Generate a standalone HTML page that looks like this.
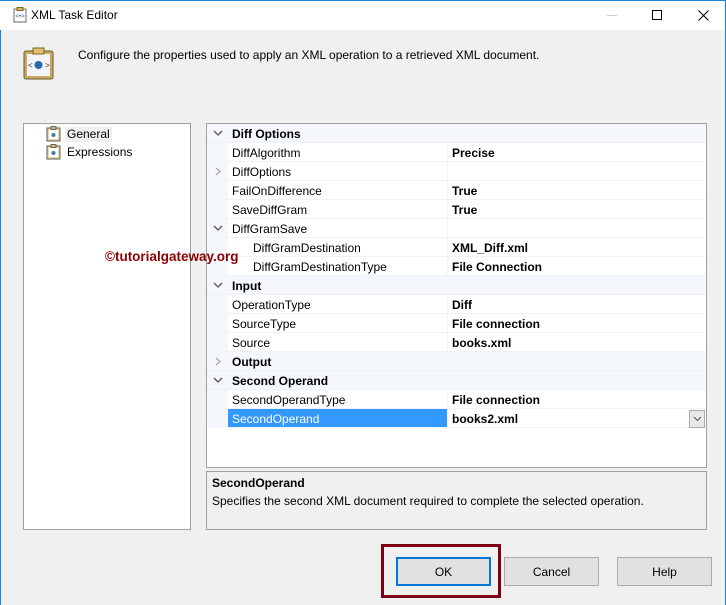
<!DOCTYPE html>
<html><head><meta charset="utf-8"><style>
*{margin:0;padding:0;box-sizing:border-box}
body{width:726px;height:605px;overflow:hidden;background:#f0f0f0;font-family:"Segoe UI","Liberation Sans",sans-serif;font-size:12px;color:#000;position:relative}
.abs{position:absolute}
#win{position:absolute;left:0;top:0;width:726px;height:605px;border:1px solid #1883d7;border-bottom:none}
#title{position:absolute;left:0;top:0;width:724px;height:30px;background:#fff;border-top:1px solid #1883d7}
.row{position:absolute;left:0;width:498px;height:19px;line-height:20px}
.cat{background:#f4f7fc;font-weight:bold;border-bottom:1px solid #eef1f7}
.cat .t{position:absolute;left:25px}
.prop .g{position:absolute;left:0;top:0;width:21px;height:19px;background:#f4f7fc}
.prop .n{position:absolute;left:21px;top:0;width:219px;height:19px;padding-left:4px;border-bottom:1px solid #f0f2f7;background:#fff}
.prop .v{position:absolute;left:240px;top:0;width:258px;height:19px;padding-left:4px;font-weight:bold;border-bottom:1px solid #f0f2f7;border-left:1px solid #f0f2f7;background:#fff}
svg.ch{position:absolute;left:6px;top:5px}
.btn{position:absolute;top:557px;height:29px;width:95px;background:#e1e1e1;border:1px solid #adadad;text-align:center;line-height:29px;font-size:12px}
</style></head><body>
<div id="win"></div>
<div id="title"></div>
<svg class="abs" style="left:12px;top:7px" width="16" height="16" viewBox="0 0 16 16"><rect x="2" y="2" width="12" height="13" fill="#fff" stroke="#6b6b6b"/><rect x="5" y="0.5" width="6" height="3" fill="#d8b860" stroke="#7a6420"/><text x="3.5" y="11" font-size="6" fill="#2060a0" font-family="Liberation Sans">&lt;•&gt;</text></svg>
<div class="abs" style="left:31px;top:8px;font-size:12px">XML Task Editor</div>
<div class="abs" style="left:607px;top:15px;width:10px;height:1px;background:#ccc"></div>
<div class="abs" style="left:652px;top:10px;width:10px;height:10px;border:1px solid #000"></div>
<svg class="abs" style="left:698px;top:10px" width="11" height="11"><path d="M0.5 0.5L10.5 10.5M10.5 0.5L0.5 10.5" stroke="#000" stroke-width="1"/></svg>
<svg class="abs" style="left:23px;top:47px" width="32" height="33" viewBox="0 0 32 33"><rect x="1" y="4" width="29" height="28" rx="2" fill="#c8a860" stroke="#6a5a30"/><rect x="4" y="7" width="23" height="22" fill="#f4f4f8"/><rect x="10" y="1" width="11" height="6" fill="#e0c070" stroke="#7a6420"/><circle cx="15.5" cy="18" r="4" fill="#2a6ab0"/><text x="5" y="21" font-size="8" fill="#333" font-family="Liberation Sans">&lt;</text><text x="22" y="21" font-size="8" fill="#333" font-family="Liberation Sans">&gt;</text></svg>
<div class="abs" style="left:78px;top:48px">Configure the properties used to apply an XML operation to a retrieved XML document.</div>

<div class="abs" style="left:23px;top:123px;width:168px;height:407px;background:#fff;border:1px solid #a0a0a0"></div>
<svg class="abs" style="left:46px;top:126px" width="16" height="16"><rect x="1" y="2" width="13" height="13" fill="#e8d8a8" stroke="#5a5a5a"/><rect x="3" y="4" width="9" height="9" fill="#fff"/><rect x="5" y="0.5" width="5" height="3" fill="#d8b860" stroke="#666"/><circle cx="7.5" cy="9" r="2" fill="#3a7ab0"/></svg>
<div class="abs" style="left:65px;top:127px;background:#f0f0f0;padding:0 2px;line-height:15px">General</div>
<svg class="abs" style="left:46px;top:144px" width="16" height="16"><rect x="1" y="2" width="13" height="13" fill="#e8d8a8" stroke="#5a5a5a"/><rect x="3" y="4" width="9" height="9" fill="#fff"/><rect x="5" y="0.5" width="5" height="3" fill="#d8b860" stroke="#666"/><circle cx="7.5" cy="9" r="2" fill="#3a7ab0"/></svg>
<div class="abs" style="left:67px;top:145px;line-height:15px">Expressions</div>

<div class="abs" style="left:206px;top:123px;width:501px;height:345px;background:#fff;border:1px solid #a0a0a0;overflow:hidden">
<div style="position:relative;left:0;top:0">
<div class="row cat" style="top:0"><svg class="ch" width="10" height="8"><path d="M1 2L5 6L9 2" stroke="#555" fill="none" stroke-width="1.3"/></svg><span class="t">Diff Options</span></div>
<div class="row prop" style="top:19px"><div class="g"></div><div class="n">DiffAlgorithm</div><div class="v">Precise</div></div>
<div class="row prop" style="top:38px"><div class="g"><svg class="ch" width="10" height="9"><path d="M3 1L7 4.5L3 8" stroke="#aaa" fill="none" stroke-width="1.3"/></svg></div><div class="n">DiffOptions</div><div class="v"></div></div>
<div class="row prop" style="top:57px"><div class="g"></div><div class="n">FailOnDifference</div><div class="v">True</div></div>
<div class="row prop" style="top:76px"><div class="g"></div><div class="n">SaveDiffGram</div><div class="v">True</div></div>
<div class="row prop" style="top:95px"><div class="g"><svg class="ch" width="10" height="8"><path d="M1 2L5 6L9 2" stroke="#555" fill="none" stroke-width="1.3"/></svg></div><div class="n">DiffGramSave</div><div class="v"></div></div>
<div class="row prop" style="top:114px"><div class="g"></div><div class="n" style="padding-left:25px">DiffGramDestination</div><div class="v">XML_Diff.xml</div></div>
<div class="row prop" style="top:133px"><div class="g"></div><div class="n" style="padding-left:25px">DiffGramDestinationType</div><div class="v">File Connection</div></div>
<div class="row cat" style="top:152px"><svg class="ch" width="10" height="8"><path d="M1 2L5 6L9 2" stroke="#555" fill="none" stroke-width="1.3"/></svg><span class="t">Input</span></div>
<div class="row prop" style="top:171px"><div class="g"></div><div class="n">OperationType</div><div class="v">Diff</div></div>
<div class="row prop" style="top:190px"><div class="g"></div><div class="n">SourceType</div><div class="v">File connection</div></div>
<div class="row prop" style="top:209px"><div class="g"></div><div class="n">Source</div><div class="v">books.xml</div></div>
<div class="row cat" style="top:228px"><svg class="ch" width="10" height="9"><path d="M3 1L7 4.5L3 8" stroke="#aaa" fill="none" stroke-width="1.3"/></svg><span class="t">Output</span></div>
<div class="row cat" style="top:247px"><svg class="ch" width="10" height="8"><path d="M1 2L5 6L9 2" stroke="#555" fill="none" stroke-width="1.3"/></svg><span class="t">Second Operand</span></div>
<div class="row prop" style="top:266px"><div class="g"></div><div class="n">SecondOperandType</div><div class="v">File connection</div></div>
<div class="row prop" style="top:285px"><div class="g"></div><div class="n" style="background:#3399ff;color:#fff">SecondOperand</div><div class="v">books2.xml</div></div>
</div>
</div>
<div class="abs" style="left:689px;top:410px;width:16px;height:18px;background:#e8e8e8;border:1px solid #aaa"><svg style="position:absolute;left:3px;top:5px" width="9" height="6"><path d="M1 1L4.5 4.5L8 1" stroke="#555" fill="none"/></svg></div>

<div class="abs" style="left:206px;top:471px;width:501px;height:59px;border:1px solid #a0a0a0;background:#f0f0f0">
<div class="abs" style="left:5px;top:4px;font-weight:bold">SecondOperand</div>
<div class="abs" style="left:5px;top:22px">Specifies the second XML document required to complete the selected operation.</div>
</div>

<div class="abs" style="left:105px;top:249px;color:#8b0000;font-weight:bold;font-size:13.5px;font-family:'Liberation Sans',sans-serif">©tutorialgateway.org</div>

<div class="abs" style="left:381px;top:544px;width:120px;height:54px;border:3px solid #7d0016"></div>
<div class="btn" style="left:396px;border:2px solid #0078d7;line-height:27px">OK</div>
<div class="btn" style="left:504px">Cancel</div>
<div class="btn" style="left:617px">Help</div>
</body></html>
